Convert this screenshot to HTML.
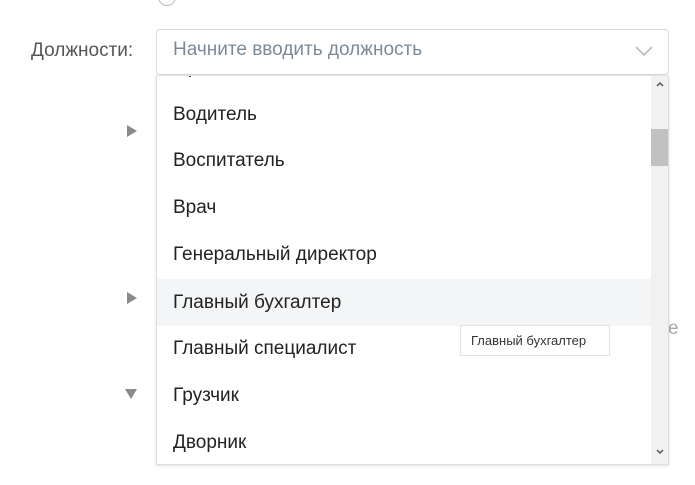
<!DOCTYPE html>
<html><head><meta charset="utf-8"><style>
*{margin:0;padding:0;box-sizing:border-box}
body{width:695px;height:485px;background:#fff;position:relative;overflow:hidden;font-family:"Liberation Sans",Arial,sans-serif}
.abs{position:absolute}
.lbl{left:31px;top:40px;font-size:19px;color:#555}
.inp{left:156px;top:29px;width:513px;height:46px;border:1px solid #d9d9d9;border-radius:4px;background:#fff}
.ph{left:173px;top:39px;font-size:19px;color:#7d8a96}
.dd{left:156px;top:75px;width:513px;height:390px;border:1px solid #ddd;border-top:1px solid #e6e6e6;background:#fff;box-shadow:0 1px 3px rgba(0,0,0,.12);overflow:hidden}
.it{position:absolute;left:0;width:494px;height:47px;line-height:47px;padding-left:16px;font-size:19px;color:#222}
.sb{position:absolute;left:494px;top:0;width:18px;height:390px;background:#f1f1f1}
.th{position:absolute;left:0;top:53px;width:18px;height:37px;background:#c1c1c1}
.tri{width:0;height:0;border-top:6px solid transparent;border-bottom:6px solid transparent;border-left:10px solid #8a8a8a}
.trd{width:0;height:0;border-left:6px solid transparent;border-right:6px solid transparent;border-top:10px solid #8a8a8a}
.tip{left:460px;top:325px;width:150px;height:31px;border:1px solid #e2e2e2;background:#fff;font-size:13px;color:#333;line-height:29px;padding-left:10px}
</style></head><body>
<div class="abs" style="left:158px;top:-12px;width:18px;height:18px;border:1px solid #bbb;border-radius:50%"></div>
<div class="abs tri" style="left:127px;top:125px"></div>
<div class="abs tri" style="left:127px;top:292px"></div>
<div class="abs trd" style="left:125px;top:389px"></div>
<div class="abs" style="left:668px;top:318px;font-size:19px;color:#aaa">e</div>
<div class="abs lbl">Должности:</div>
<div class="abs inp"></div>
<div class="abs ph">Начните вводить должность</div>
<svg class="abs" style="left:634px;top:45px" width="20" height="12"><path d="M2 2 L10 10 L18 2" fill="none" stroke="#bbb" stroke-width="1.6"/></svg>
<div class="abs dd">
 <div class="abs" style="left:32px;top:-2px;width:2px;height:3px;background:#444"></div>
 <div class="it" style="top:15px">Водитель</div>
 <div class="it" style="top:61px">Воспитатель</div>
 <div class="it" style="top:108px">Врач</div>
 <div class="it" style="top:155px">Генеральный директор</div>
 <div class="it" style="top:203px;background:#f4f5f6">Главный бухгалтер</div>
 <div class="it" style="top:249px">Главный специалист</div>
 <div class="it" style="top:296px">Грузчик</div>
 <div class="it" style="top:343px">Дворник</div>
 <div class="sb"><div class="th"></div>
  <svg style="position:absolute;left:5px;top:5px" width="8" height="6"><path d="M1 5 L4 2 L7 5" fill="none" stroke="#555" stroke-width="1.5"/></svg>
  <svg style="position:absolute;left:5px;top:373px" width="8" height="6"><path d="M1 1 L4 4 L7 1" fill="none" stroke="#555" stroke-width="1.5"/></svg>
 </div>
</div>
<div class="abs tip">Главный бухгалтер</div>
</body></html>
